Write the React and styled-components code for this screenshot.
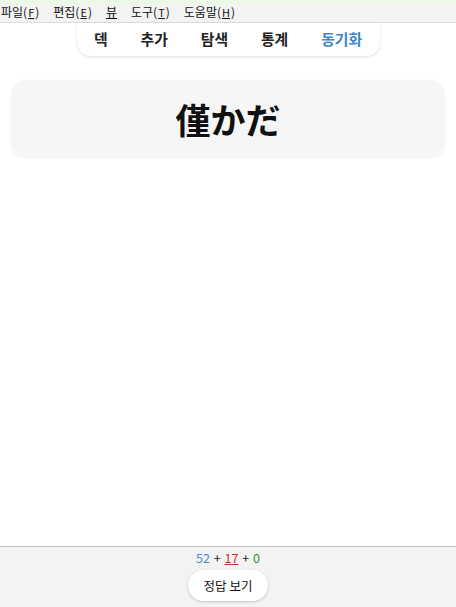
import React from "react";
import styled, { createGlobalStyle } from "styled-components";

const Global = createGlobalStyle`
  html, body { margin: 0; padding: 0; height: 100%; }
  body {
    font-family: "Noto Sans CJK KR", "Noto Sans", sans-serif;
    background: #fff;
    color: #111;
  }
  #root { height: 100%; }
`;

const Page = styled.div`
  display: flex;
  flex-direction: column;
  height: 607px;
`;

const MenuBar = styled.div`
  display: flex;
  align-items: flex-end;
  gap: 14px;
  height: 23px;
  box-sizing: border-box;
  padding: 0 0 3px 1px;
  background: linear-gradient(#ecf9e8 0, #ecf9e8 5px, #f3f3f3 5px);
  border-bottom: 1px solid #dedede;
  font-family: "Noto Sans CJK KR", sans-serif;
  font-size: 12px;
  line-height: 14px;
  color: #111;
`;

const MenuItem = styled.span`
  u { text-decoration: underline; }
`;

const Key = styled.span`
  text-decoration: underline;
  font-size: 11px;
  padding: 0 1px;
`;

const Nav = styled.div`
  align-self: center;
  display: flex;
  width: 303px;
  height: 33px;
  box-sizing: border-box;
  justify-content: center;
  align-items: center;
  background: #fff;
  border-radius: 0 0 14px 14px;
  box-shadow: 0 1px 3px rgba(0, 0, 0, 0.13);
`;

const Tab = styled.span`
  padding: 0 16.5px;
  font-weight: 700;
  font-size: 14.8px;
  color: ${(p) => (p.$active ? "#3b87c9" : "#222")};
  margin-top: -2px;
  white-space: nowrap;
`;

const Main = styled.div`
  flex: 1;
  padding: 24px 11px 0 11px;
`;

const Card = styled.div`
  height: 77px;
  display: flex;
  align-items: center;
  justify-content: center;
  background: #f6f6f6;
  border-radius: 15px;
  box-shadow: 0 1px 3px rgba(0, 0, 0, 0.06);
  font-family: "Noto Sans CJK JP", sans-serif;
  font-weight: 700;
  font-size: 35px;
  color: #111;
`;

const Bottom = styled.div`
  height: 61px;
  box-sizing: border-box;
  background: #f3f3f3;
  border-top: 1px solid #c3c3c3;
  display: flex;
  flex-direction: column;
  align-items: center;
  padding-top: 3px;
`;

const Counts = styled.div`
  font-size: 12.5px;
  line-height: 16px;
  color: #222;
  word-spacing: 1px;
`;

const Num = styled.span`
  color: ${(p) => p.$c};
  text-decoration: ${(p) => (p.$u ? "underline" : "none")};
`;

const Button = styled.button`
  margin-top: 4px;
  width: 80px;
  height: 31px;
  border: none;
  border-radius: 16px;
  background: #fff;
  box-shadow: 0 1px 3px rgba(0, 0, 0, 0.2);
  font-family: "Noto Sans CJK KR", sans-serif;
  font-size: 12.5px;
  color: #111;
`;

export default function App() {
  return (
    <>
      <Global />
      <Page>
        <MenuBar>
          <MenuItem>파일(<Key>F</Key>)</MenuItem>
          <MenuItem>편집(<Key>E</Key>)</MenuItem>
          <MenuItem><u>뷰</u></MenuItem>
          <MenuItem>도구(<Key>T</Key>)</MenuItem>
          <MenuItem>도움말(<Key>H</Key>)</MenuItem>
        </MenuBar>
        <Nav>
          <Tab>덱</Tab>
          <Tab>추가</Tab>
          <Tab>탐색</Tab>
          <Tab>통계</Tab>
          <Tab $active>동기화</Tab>
        </Nav>
        <Main>
          <Card>僅かだ</Card>
        </Main>
        <Bottom>
          <Counts>
            <Num $c="#4a86d0">52</Num> + <Num $c="#c83232" $u>17</Num> +{" "}
            <Num $c="#2f8f3a">0</Num>
          </Counts>
          <Button>정답 보기</Button>
        </Bottom>
      </Page>
    </>
  );
}
